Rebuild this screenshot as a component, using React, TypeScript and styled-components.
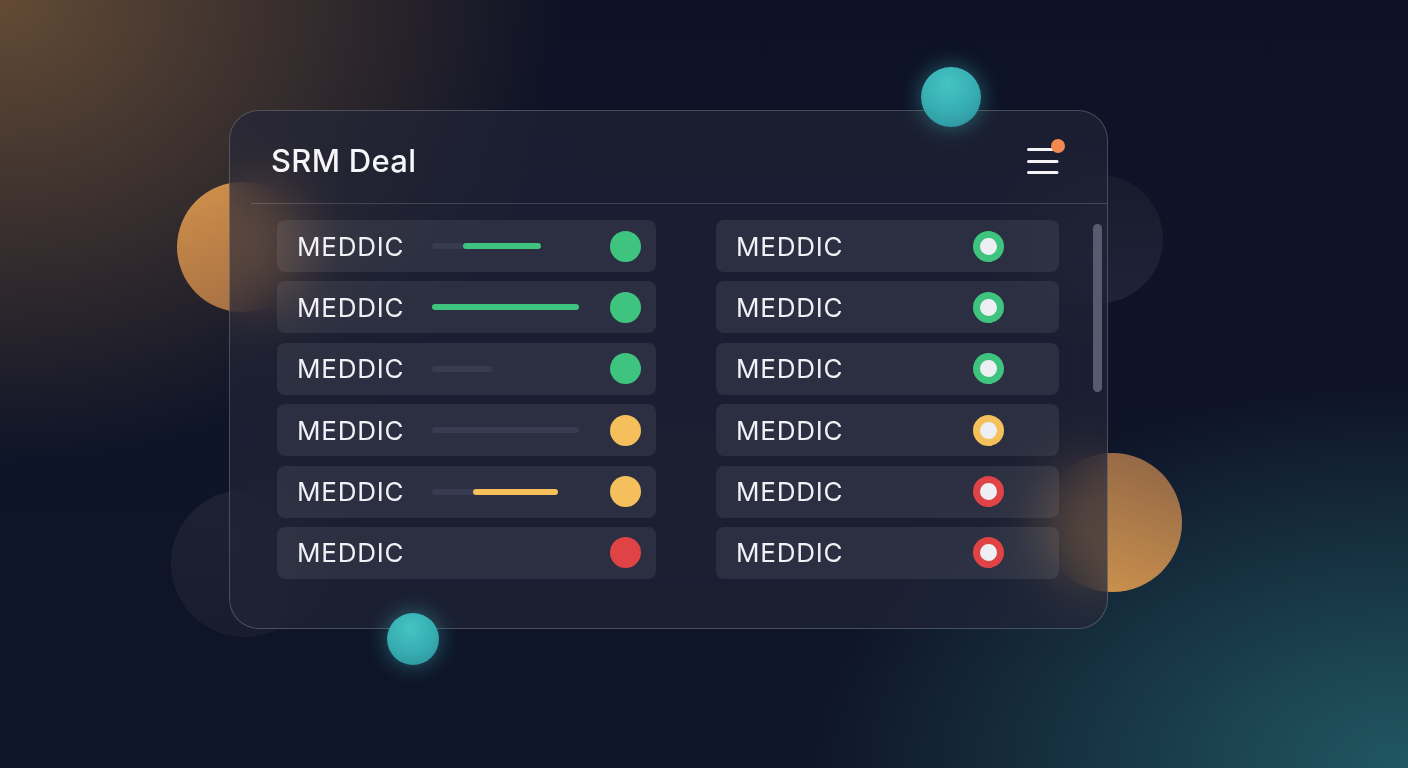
import React from "react";
import styled, { createGlobalStyle } from "styled-components";

const GlobalStyle = createGlobalStyle`
    html, body {
        margin: 0;
        padding: 0;
        background: #0d1224;
    }
    body {
        font-family: Inter, "Noto Sans", "Liberation Sans", sans-serif;
        -webkit-font-smoothing: antialiased;
    }
`;

type Seg = { track: number; fill: number; color?: string };

const GREEN = "#3ec47f";
const YELLOW = "#f5c05b";
const RED = "#e04346";

interface LeftItem {
    bar?: Seg;
    dot: string;
}

const leftItems: LeftItem[] = [
    { bar: { track: 31, fill: 78, color: GREEN }, dot: GREEN },
    { bar: { track: 0, fill: 147, color: GREEN }, dot: GREEN },
    { bar: { track: 60, fill: 0 }, dot: GREEN },
    { bar: { track: 147, fill: 0 }, dot: YELLOW },
    { bar: { track: 41, fill: 85, color: YELLOW }, dot: YELLOW },
    { dot: RED },
];

const rightItems = [GREEN, GREEN, GREEN, YELLOW, RED, RED];

const App: React.FC = () => {
    return (
        <>
            <GlobalStyle />
            <Stage>
                <Blob $x={177} $y={182} $size={130} $bg="linear-gradient(160deg, #d2914c 0%, #a06c42 100%)" />
                <Blob $x={1043} $y={453} $size={139} $bg="linear-gradient(200deg, #8e6446 0%, #d2964e 100%)" />
                <Blob $x={1035} $y={175} $size={128} $bg="linear-gradient(180deg, #181b2d 0%, #202338 100%)" />
                <Blob $x={171} $y={490} $size={147} $bg="linear-gradient(180deg, #1e2133 0%, #191c2d 100%)" />

                <Card>
                    <Header>
                        <Title>SRM Deal</Title>
                        <MenuButton aria-label="menu">
                            <svg width="40" height="40" viewBox="0 0 40 40">
                                <g stroke="#f4f4f7" strokeWidth="3" strokeLinecap="round">
                                    <line x1="5.5" y1="10.5" x2="34" y2="10.5" />
                                    <line x1="5.5" y1="22.5" x2="34" y2="22.5" />
                                    <line x1="5.5" y1="33.5" x2="34" y2="33.5" />
                                </g>
                            </svg>
                            <Badge />
                        </MenuButton>
                    </Header>
                    <Divider />
                    <Body>
                        <Column>
                            {leftItems.map((item, i) => (
                                <Row key={i} $padRight={15}>
                                    <Label>MEDDIC</Label>
                                    <Bar>
                                        {item.bar && item.bar.track > 0 && <TrackSeg style={{ width: item.bar.track }} />}
                                        {item.bar && item.bar.fill > 0 && (
                                            <FillSeg $color={item.bar.color || GREEN} style={{ width: item.bar.fill }} />
                                        )}
                                    </Bar>
                                    <Dot $color={item.dot} />
                                </Row>
                            ))}
                        </Column>
                        <Column>
                            {rightItems.map((c, i) => (
                                <Row key={i} $padRight={55}>
                                    <Label>MEDDIC</Label>
                                    <RingDot $color={c} />
                                </Row>
                            ))}
                        </Column>
                        <Scrollbar />
                    </Body>
                </Card>

                <Orb $x={921} $y={67} $size={60} />
                <Orb $x={387} $y={613} $size={52} />
            </Stage>
        </>
    );
};

const Stage = styled.div`
    position: relative;
    width: 1408px;
    height: 768px;
    overflow: hidden;
    box-sizing: border-box;
    padding: 110px 0 0 229px;
    background:
        radial-gradient(560px 460px at 0 0, rgba(128, 94, 58, 0.75), rgba(128, 94, 58, 0) 100%),
        radial-gradient(600px 380px at 100% 100%, rgba(38, 110, 116, 0.75), rgba(38, 110, 116, 0) 100%),
        linear-gradient(180deg, #0e1226 0%, #0f1529 100%);
`;

const Blob = styled.div<{ $x: number; $y: number; $size: number; $bg: string }>`
    position: absolute;
    left: ${(p) => p.$x}px;
    top: ${(p) => p.$y}px;
    width: ${(p) => p.$size}px;
    height: ${(p) => p.$size}px;
    border-radius: 50%;
    background: ${(p) => p.$bg};
    z-index: 0;
`;

const Orb = styled.div<{ $x: number; $y: number; $size: number }>`
    position: absolute;
    left: ${(p) => p.$x}px;
    top: ${(p) => p.$y}px;
    width: ${(p) => p.$size}px;
    height: ${(p) => p.$size}px;
    border-radius: 50%;
    background: radial-gradient(circle at 45% 30%, #45c4c4 0%, #37aeb2 50%, #2c8c98 100%);
    box-shadow: 0 0 22px rgba(64, 200, 200, 0.45);
    z-index: 2;
`;

const Card = styled.div`
    position: relative;
    z-index: 1;
    width: 879px;
    height: 519px;
    box-sizing: border-box;
    border-radius: 30px;
    border: 1px solid rgba(255, 255, 255, 0.2);
    background: rgba(34, 38, 56, 0.64);
    backdrop-filter: blur(28px);
    -webkit-backdrop-filter: blur(28px);
    display: flex;
    flex-direction: column;
`;

const Header = styled.div`
    height: 92px;
    display: flex;
    align-items: center;
    justify-content: space-between;
    padding: 0 44px 0 41px;
`;

const Title = styled.h1`
    margin: 6px 0 0;
    font-size: 31px;
    font-weight: 500;
    color: #f6f6f8;
    letter-spacing: 0.3px;
`;

const MenuButton = styled.div`
    position: relative;
    width: 40px;
    height: 40px;
    margin-top: 4px;
`;

const Badge = styled.span`
    position: absolute;
    top: 0;
    right: -2px;
    width: 14px;
    height: 14px;
    border-radius: 50%;
    background: #f08a50;
`;

const Divider = styled.div`
    height: 1px;
    margin-left: 21px;
    background: rgba(255, 255, 255, 0.16);
`;

const Body = styled.div`
    display: flex;
    align-items: flex-start;
    padding: 16px 0 0 47px;
    gap: 60px;
`;

const Column = styled.div`
    display: flex;
    flex-direction: column;
    gap: 9.4px;
    &:first-child {
        width: 379px;
    }
    &:nth-child(2) {
        width: 343px;
    }
`;

const Row = styled.div<{ $padRight: number }>`
    height: 52px;
    display: flex;
    align-items: center;
    padding: 0 ${(p) => p.$padRight}px 0 20px;
    border-radius: 8px;
    background: rgba(255, 255, 255, 0.075);
`;

const Label = styled.span`
    width: 135px;
    font-size: 26px;
    font-weight: 400;
    color: #f1f1f5;
    letter-spacing: 0.8px;
`;

const Bar = styled.div`
    width: 147px;
    height: 6px;
    display: flex;
`;

const TrackSeg = styled.div`
    height: 100%;
    background: #393c50;
    border-radius: 3px 0 0 3px;
    &:last-child {
        border-radius: 3px;
    }
`;

const FillSeg = styled.div<{ $color: string }>`
    height: 100%;
    background: ${(p) => p.$color};
    border-radius: 3px;
`;

const Dot = styled.span<{ $color: string }>`
    margin-left: auto;
    width: 31px;
    height: 31px;
    border-radius: 50%;
    background: ${(p) => p.$color};
`;

const RingDot = styled.span<{ $color: string }>`
    margin-left: auto;
    width: 31px;
    height: 31px;
    box-sizing: border-box;
    border-radius: 50%;
    border: 7.5px solid ${(p) => p.$color};
    background: #eeeff2;
`;

const Scrollbar = styled.div`
    width: 9px;
    height: 168px;
    margin: 4px 0 0 -26px;
    border-radius: 5px;
    background: #575b70;
`;

export default App;
